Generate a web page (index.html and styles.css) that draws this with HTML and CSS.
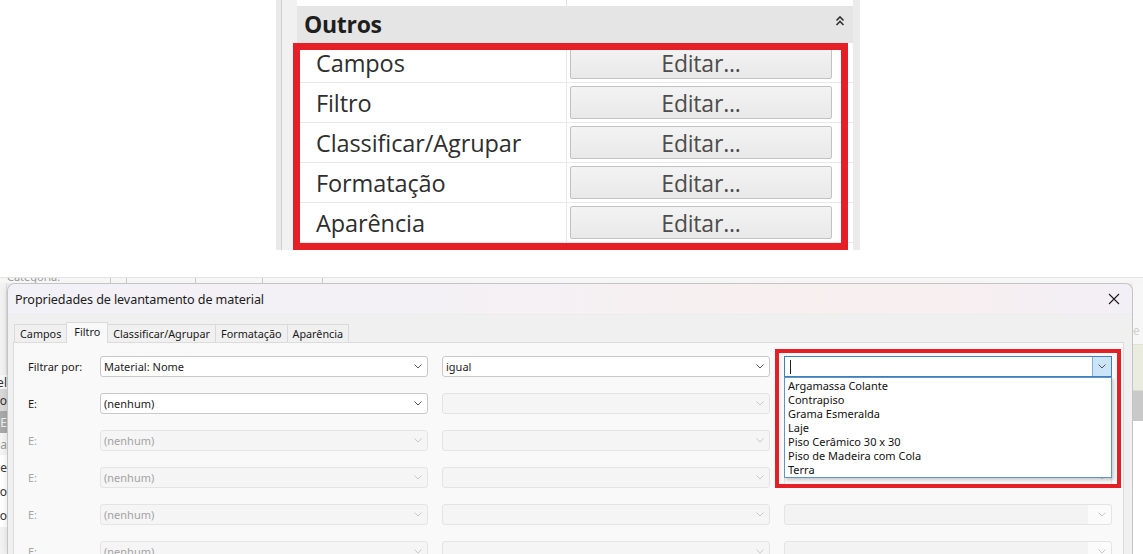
FILE: index.html
```html
<!DOCTYPE html>
<html lang="pt">
<head>
<meta charset="utf-8">
<title>Propriedades de levantamento de material</title>
<link rel="stylesheet" href="styles.css">
</head>
<body>
<div class="page">
  <section class="props">
    <div class="props-gutter"></div>
    <div class="props-table">
      <div class="props-top"><span class="pt-l"></span><span class="pt-r"></span></div>
      <div class="props-group">
        <span class="group-title">Outros</span>
        <svg class="group-chev" width="10" height="12" viewBox="0 0 10 12"><path d="M1.5 5.5 L5 2 L8.5 5.5 M1.5 10 L5 6.5 L8.5 10" fill="none" stroke="#333" stroke-width="1.6"/></svg>
      </div>
      <div class="props-row"><span class="pr-label">Campos</span><span class="pr-value"><span class="edit-btn">Editar...</span></span></div>
      <div class="props-row"><span class="pr-label">Filtro</span><span class="pr-value"><span class="edit-btn">Editar...</span></span></div>
      <div class="props-row"><span class="pr-label">Classificar/Agrupar</span><span class="pr-value"><span class="edit-btn">Editar...</span></span></div>
      <div class="props-row"><span class="pr-label">Formatação</span><span class="pr-value"><span class="edit-btn">Editar...</span></span></div>
      <div class="props-row"><span class="pr-label">Aparência</span><span class="pr-value"><span class="edit-btn">Editar...</span></span></div>
    </div>
    <div class="props-edge"></div>
    <div class="red-box props-red"></div>
  </section>

  <section class="shot">
    <div class="bg-top">
      <span class="bg-top-text">Categoria:</span>
      <span class="bg-tick t1"></span><span class="bg-tick t2"></span><span class="bg-tick t3"></span><span class="bg-tick t4"></span><span class="bg-tick t5"></span>
    </div>
    <div class="shot-main">
      <div class="bg-left">
        <div class="bl b0"></div>
        <div class="bl b1"><span>Nível</span></div>
        <div class="bl b2"><span>Topo</span></div>
        <div class="bl b3"><span>E</span></div>
        <div class="bl b4"><span>Área</span></div>
        <div class="bl b5"><span>Nome</span></div>
        <div class="bl b6"><span>Título</span></div>
        <div class="bl b7"><span>Co</span></div>
      </div>

      <div class="dialog">
        <div class="titlebar">
          <span class="title">Propriedades de levantamento de material</span>
          <svg class="close" width="12" height="12" viewBox="0 0 12 12"><path d="M1 1 L11 11 M11 1 L1 11" stroke="#1b1b1b" stroke-width="1.1" fill="none"/></svg>
        </div>
        <div class="tabs">
          <span class="tab">Campos</span>
          <span class="tab active">Filtro</span>
          <span class="tab">Classificar/Agrupar</span>
          <span class="tab">Formatação</span>
          <span class="tab">Aparência</span>
        </div>
        <div class="panel">
          <div class="filter-grid">
            <span class="flabel">Filtrar por:</span>
            <div class="combo"><span class="ctext">Material: Nome</span><svg class="chev" width="8" height="5" viewBox="0 0 8 5"><path d="M0.5 0.5 L4 4 L7.5 0.5" fill="none" stroke="#555" stroke-width="1"/></svg></div>
            <div class="combo"><span class="ctext">igual</span><svg class="chev" width="8" height="5" viewBox="0 0 8 5"><path d="M0.5 0.5 L4 4 L7.5 0.5" fill="none" stroke="#555" stroke-width="1"/></svg></div>
            <div class="combo-cell">
              <div class="combo focused"><span class="caret"></span><span class="drop-btn"><svg width="8" height="5" viewBox="0 0 8 5"><path d="M0.5 0.5 L4 4 L7.5 0.5" fill="none" stroke="#555" stroke-width="1"/></svg></span></div>
              <ul class="droplist">
                <li>Argamassa Colante</li>
                <li>Contrapiso</li>
                <li>Grama Esmeralda</li>
                <li>Laje</li>
                <li>Piso Cerâmico 30 x 30</li>
                <li>Piso de Madeira com Cola</li>
                <li>Terra</li>
              </ul>
              <div class="red-box dialog-red"></div>
            </div>

            <span class="flabel">E:</span>
            <div class="combo"><span class="ctext">(nenhum)</span><svg class="chev" width="8" height="5" viewBox="0 0 8 5"><path d="M0.5 0.5 L4 4 L7.5 0.5" fill="none" stroke="#555" stroke-width="1"/></svg></div>
            <div class="combo disabled"><svg class="chev" width="8" height="5" viewBox="0 0 8 5"><path d="M0.5 0.5 L4 4 L7.5 0.5" fill="none" stroke="#c8c8c8" stroke-width="1"/></svg></div>
            <div class="combo disabled"><svg class="chev" width="8" height="5" viewBox="0 0 8 5"><path d="M0.5 0.5 L4 4 L7.5 0.5" fill="none" stroke="#c8c8c8" stroke-width="1"/></svg></div>

            <span class="flabel dim">E:</span>
            <div class="combo disabled"><span class="ctext">(nenhum)</span><svg class="chev" width="8" height="5" viewBox="0 0 8 5"><path d="M0.5 0.5 L4 4 L7.5 0.5" fill="none" stroke="#c8c8c8" stroke-width="1"/></svg></div>
            <div class="combo disabled"><svg class="chev" width="8" height="5" viewBox="0 0 8 5"><path d="M0.5 0.5 L4 4 L7.5 0.5" fill="none" stroke="#c8c8c8" stroke-width="1"/></svg></div>
            <div class="combo disabled"><svg class="chev" width="8" height="5" viewBox="0 0 8 5"><path d="M0.5 0.5 L4 4 L7.5 0.5" fill="none" stroke="#c8c8c8" stroke-width="1"/></svg></div>

            <span class="flabel dim">E:</span>
            <div class="combo disabled"><span class="ctext">(nenhum)</span><svg class="chev" width="8" height="5" viewBox="0 0 8 5"><path d="M0.5 0.5 L4 4 L7.5 0.5" fill="none" stroke="#c8c8c8" stroke-width="1"/></svg></div>
            <div class="combo disabled"><svg class="chev" width="8" height="5" viewBox="0 0 8 5"><path d="M0.5 0.5 L4 4 L7.5 0.5" fill="none" stroke="#c8c8c8" stroke-width="1"/></svg></div>
            <div class="combo disabled"><svg class="chev" width="8" height="5" viewBox="0 0 8 5"><path d="M0.5 0.5 L4 4 L7.5 0.5" fill="none" stroke="#c8c8c8" stroke-width="1"/></svg></div>

            <span class="flabel dim">E:</span>
            <div class="combo disabled"><span class="ctext">(nenhum)</span><svg class="chev" width="8" height="5" viewBox="0 0 8 5"><path d="M0.5 0.5 L4 4 L7.5 0.5" fill="none" stroke="#c8c8c8" stroke-width="1"/></svg></div>
            <div class="combo disabled"><svg class="chev" width="8" height="5" viewBox="0 0 8 5"><path d="M0.5 0.5 L4 4 L7.5 0.5" fill="none" stroke="#c8c8c8" stroke-width="1"/></svg></div>
            <div class="combo disabled split"><svg class="chev" width="8" height="5" viewBox="0 0 8 5"><path d="M0.5 0.5 L4 4 L7.5 0.5" fill="none" stroke="#c8c8c8" stroke-width="1"/></svg></div>

            <span class="flabel dim">E:</span>
            <div class="combo disabled"><span class="ctext">(nenhum)</span><svg class="chev" width="8" height="5" viewBox="0 0 8 5"><path d="M0.5 0.5 L4 4 L7.5 0.5" fill="none" stroke="#c8c8c8" stroke-width="1"/></svg></div>
            <div class="combo disabled"><svg class="chev" width="8" height="5" viewBox="0 0 8 5"><path d="M0.5 0.5 L4 4 L7.5 0.5" fill="none" stroke="#c8c8c8" stroke-width="1"/></svg></div>
            <div class="combo disabled split"><svg class="chev" width="8" height="5" viewBox="0 0 8 5"><path d="M0.5 0.5 L4 4 L7.5 0.5" fill="none" stroke="#c8c8c8" stroke-width="1"/></svg></div>
          </div>
        </div>
      </div>

      <div class="bg-right">
        <div class="br r0"><span>e</span></div>
        <div class="br r1"></div>
        <div class="br r2"></div>
        <div class="br r3"></div>
      </div>
    </div>
  </section>
</div>
</body>
</html>
```

FILE: styles.css
```css
* { box-sizing: border-box; }
html, body { margin: 0; padding: 0; background: #ffffff; }
body { font-family: "Noto Sans", "Open Sans", sans-serif; color: #222; }
.page { width: 1143px; height: 554px; overflow: hidden; }

/* ---------- Top: Revit properties crop ---------- */
.props {
  position: relative;
  margin-left: 276px;
  width: 584px;
  height: 250px;
  display: flex;
  background: #f0f0f0;
}
.props-gutter {
  width: 21px;
  background: linear-gradient(90deg, #e9e9e9 0 5px, #cfcfcf 5px 6px, #f1f1f1 6px);
}
.props-table {
  width: 556px;
  display: flex;
  flex-direction: column;
  background: #ffffff;
}
.props-edge { flex: 1; background: #ebebeb; }
.props-top { height: 6px; display: flex; }
.pt-l { width: 270px; border-right: 1px solid #e2e2e2; }
.pt-r { flex: 1; }
.props-group {
  height: 37px;
  background: #e5e5e5;
  display: flex;
  align-items: center;
  padding: 0 8px 2px 7px;
}
.group-title {
  font-family: "Open Sans", "Noto Sans", sans-serif;
  font-weight: 700;
  font-size: 23px;
  color: #1e1e1e;
  letter-spacing: -0.3px;
}
.group-chev { margin-left: auto; margin-top: -6px; }
.props-row {
  height: 40px;
  display: flex;
  border-bottom: 1px solid #e8e8e8;
}
.pr-label {
  width: 270px;
  padding-left: 19px;
  display: flex;
  align-items: center;
  font-family: "Open Sans", "Noto Sans", sans-serif;
  font-size: 23.5px;
  letter-spacing: -0.1px;
  color: #2e2e2e;
  border-right: 1px solid #e8e8e8;
}
.pr-value {
  flex: 1;
  display: flex;
  align-items: center;
  padding-left: 3px;
}
.edit-btn {
  width: 262px;
  height: 33px;
  border: 1px solid #c2c2c2;
  border-radius: 2px;
  background: linear-gradient(#f3f3f3, #e9e9e9);
  display: flex;
  align-items: center;
  justify-content: center;
  font-family: "Open Sans", "Noto Sans", sans-serif;
  font-size: 23px;
  letter-spacing: -0.2px;
  color: #4d4d4d;
}
.red-box {
  position: absolute;
  border-style: solid;
  border-color: #e51f26;
  pointer-events: none;
}
.props-red {
  left: 17px;
  top: 43px;
  width: 555px;
  height: 207px;
  border-width: 7px;
}

/* ---------- Bottom: dialog screenshot ---------- */
.shot {
  margin-top: 27px;
  height: 277px;
  display: flex;
  flex-direction: column;
  background: #f4f4f4;
  overflow: hidden;
}
.bg-top {
  position: relative;
  height: 6px;
  flex: none;
  background: #f6f6f6;
  border-top: 1px solid #e4e4e4;
  overflow: hidden;
}
.bg-top-text {
  position: absolute;
  left: 7px;
  top: -7px;
  font-size: 11px;
  line-height: 12px;
  color: #9a9a9a;
}
.bg-tick { position: absolute; bottom: 0; width: 1px; height: 5px; background: #c9c9c9; }
.t1 { left: 110px; } .t2 { left: 126px; } .t3 { left: 195px; } .t4 { left: 262px; } .t5 { left: 322px; }

.shot-main { flex: 1; display: flex; min-height: 0; }

.bg-left {
  width: 7px;
  flex: none;
  display: flex;
  flex-direction: column;
  background: #f2f2f2;
  overflow: hidden;
}
.bl {
  display: flex;
  justify-content: flex-end;
  align-items: center;
  font-size: 12px;
  color: #333;
  white-space: nowrap;
  overflow: hidden;
}
.b0 { height: 92px; border-right: 1px solid #dedede; }
.b1 { height: 14px; background: #f7f7f7; }
.b2 { height: 22px; background: #d8d8d8; }
.b3 { height: 22px; background: #a9a9a9; color: #eeeeee; }
.b4 { height: 22px; background: #f4f4f4; color: #9a9a9a; }
.b5 { height: 24px; background: #ffffff; }
.b6 { height: 24px; background: #ffffff; }
.b7 { height: 24px; background: #ffffff; }

.bg-right {
  width: 10px;
  flex: none;
  display: flex;
  flex-direction: column;
  background: #f7f7f7;
}
.br { overflow: hidden; }
.r0 { height: 61px; font-size: 12px; color: #cfcfcf; padding-top: 42px; line-height: 12px; }
.r1 { height: 47px; background: #e9ecdf; border-top: 1px solid #dfe2d5; border-bottom: 1px solid #d9dccd; }
.r2 { height: 30px; background: #c9c9c9; }
.r3 { flex: 1; background: #ffffff; }

.dialog {
  width: 1126px;
  flex: none;
  display: flex;
  flex-direction: column;
  background: #f0f0f0;
  border: 1px solid #c4c4c4;
  border-bottom: none;
  border-radius: 8px 8px 0 0;
  box-shadow: 0 0 6px rgba(0,0,0,0.12);
  overflow: hidden;
}
.titlebar {
  height: 30px;
  flex: none;
  display: flex;
  align-items: center;
  padding: 0 12px 0 7px;
  background: linear-gradient(90deg, #f2f1f7 0%, #f4f1f5 40%, #f8efef 72%, #f7eff1 86%, #f2eff6 100%);
}
.title {
  font-size: 12.6px;
  color: #1c1c1c;
  letter-spacing: -0.1px;
}
.close { margin-left: auto; }

.tabs {
  height: 28px;
  flex: none;
  display: flex;
  align-items: flex-end;
  padding-left: 6px;
  border-top: 1px solid #ececec;
}
.tab {
  height: 18px;
  padding: 0 5px;
  display: flex;
  align-items: center;
  font-size: 10.8px;
  color: #1a1a1a;
  border: 1px solid #dadada;
  border-bottom: none;
  border-left: none;
  background: #f0f0f0;
}
.tab:first-child { border-left: 1px solid #dadada; }
.tab.active {
  height: 21px;
  background: #f9f9f9;
  border-left: 1px solid #dadada;
  margin-left: -1px;
  padding: 0 7px 3px;
  position: relative;
  top: 1px;
}

.panel {
  flex: 1;
  margin: 0 8px 0 5px;
  background: #f9f9f9;
  border: 1px solid #dcdcdc;
  border-bottom: none;
  padding: 13px 0 0 14px;
}
.filter-grid {
  display: grid;
  grid-template-columns: 58px 328px 328px 328px;
  grid-auto-rows: 21px;
  column-gap: 14px;
  row-gap: 16px;
}
.flabel {
  display: flex;
  align-items: center;
  font-size: 11px;
  color: #1a1a1a;
  white-space: nowrap;
}
.flabel.dim { color: #a6a6a6; }

.combo {
  height: 21px;
  display: flex;
  align-items: center;
  background: #ffffff;
  border: 1px solid #c9c9c9;
  border-radius: 3px;
  padding-left: 3px;
  font-size: 11px;
  color: #1a1a1a;
}
.ctext { white-space: nowrap; }
.chev { margin-left: auto; margin-right: 5px; flex: none; }
.combo.disabled {
  background: #f5f5f5;
  border-color: #e4e4e4;
  color: #a3a3a3;
}
.combo.split {
  background: linear-gradient(90deg, #f3f3f3 0 93%, #fbfbfb 93%);
}

.combo-cell { position: relative; z-index: 2; }
.combo.focused {
  border: 1px solid #3d7fc0;
  border-radius: 0;
  padding-left: 5px;
  overflow: hidden;
}
.caret { width: 1px; height: 14px; background: #222; }
.drop-btn {
  margin-left: auto;
  width: 19px;
  height: 100%;
  display: flex;
  align-items: center;
  justify-content: center;
  background: #cce4f7;
  border-left: 1px solid #7fb2e0;
}
.droplist {
  position: absolute;
  left: 0;
  top: 21px;
  width: 328px;
  height: 101px;
  margin: 0;
  padding: 1px 0 0 3px;
  list-style: none;
  background: #ffffff;
  border: 1px solid #5f95c8;
  box-shadow: 2px 2px 3px rgba(0,0,0,0.18);
}
.droplist li {
  height: 14px;
  line-height: 14px;
  font-size: 11px;
  color: #111;
  white-space: nowrap;
}
.dialog-red {
  left: -9px;
  top: -7px;
  width: 346px;
  height: 139px;
  border-width: 4px;
}
```
